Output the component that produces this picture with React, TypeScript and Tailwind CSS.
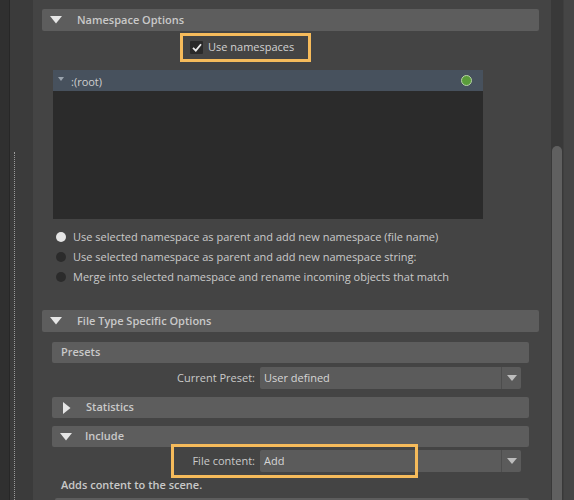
import React from "react";

const font = { fontFamily: '"Open Sans", "Noto Sans", sans-serif' };

function TriDown({ className = "" }: { className?: string }) {
  return (
    <svg width="12" height="8" viewBox="0 0 12 8" className={className}>
      <polygon points="0,0 12,0 6,7.5" fill="#e6e6e6" />
    </svg>
  );
}

function TriRight() {
  return (
    <svg width="8" height="12" viewBox="0 0 8 12">
      <polygon points="0,0 7.5,6 0,12" fill="#e6e6e6" />
    </svg>
  );
}

function SectionHeader({ title }: { title: string }) {
  return (
    <div className="flex h-[22px] items-center rounded-[2px] bg-[#5d5d5d] pl-[8px]">
      <TriDown />
      <span className="ml-[15px] text-[11px] font-semibold text-[#c9c9c9]">{title}</span>
    </div>
  );
}

function SubHeader({ title, open }: { title: string; open?: boolean | null }) {
  return (
    <div className="flex h-[21px] items-center rounded-[2px] bg-[#5d5d5d]">
      {open === true && (
        <div className="ml-[8px] mr-[13px] flex">
          <TriDown />
        </div>
      )}
      {open === false && (
        <div className="ml-[11px] mr-[15px] flex">
          <TriRight />
        </div>
      )}
      <span
        className={`text-[11px] font-semibold text-[#c9c9c9] ${open == null ? "ml-[9px]" : ""}`}
      >
        {title}
      </span>
    </div>
  );
}

function Dropdown({ value }: { value: string }) {
  return (
    <div className="flex h-[22px] w-[261px] items-center rounded-[2px] bg-[#5b5b5b]">
      <span className="flex-1 pl-[4px] text-[11px] text-[#d6d6d6]">{value}</span>
      <div className="flex h-full w-[20px] items-center justify-center border-l border-[#4d4d4d]">
        <svg width="10" height="6" viewBox="0 0 10 6">
          <polygon points="0,0 10,0 5,6" fill="#bdbdbd" />
        </svg>
      </div>
    </div>
  );
}

function Radio({ on, label }: { on?: boolean; label: string }) {
  return (
    <div className="flex h-[20px] items-center pl-[14px]">
      <span
        className={`h-[10px] w-[10px] rounded-full ${on ? "bg-[#e4e4e4]" : "bg-[#2b2b2b]"}`}
      />
      <span className="ml-[7px] text-[11px] text-[#cacaca]">{label}</span>
    </div>
  );
}

export default function App() {
  return (
    <div className="flex h-[500px] w-[574px] overflow-hidden bg-[#444444]" style={font}>
      {/* outer left strip */}
      <div className="w-[9px] bg-[#303030]" />
      <div className="w-px bg-[#272727]" />
      {/* gutter with dotted guide */}
      <div className="flex w-[23px] bg-[#3b3b3b] pt-[152px]">
        <div className="ml-[4px] h-full border-l border-dotted border-[#9a9a9a]" />
      </div>

      {/* options pane */}
      <div className="flex-1 pl-[9px] pr-[12px] pt-[9px]">
        <SectionHeader title="Namespace Options" />

        <div className="ml-[138px] mt-[2px] flex h-[29px] w-[131px] items-center border-[3px] border-[#f6bb5b] pl-[7px]">
          <span className="flex h-[13px] w-[13px] items-center justify-center rounded-[1px] bg-[#2a2a2a]">
            <svg width="10" height="9" viewBox="0 0 10 9">
              <path d="M1 4.8 L3.8 7.6 L9 1.2" stroke="#ececec" strokeWidth="1.8" fill="none" />
            </svg>
          </span>
          <span className="ml-[5px] text-[11px] text-[#d2d2d2]">Use namespaces</span>
        </div>

        <div className="ml-[11px] mt-[8px] h-[149px] w-[430px] bg-[#2b2b2b]">
          <div className="flex h-[21px] items-center bg-[#47515d] pl-[5px] pr-[11px]">
            <svg width="6" height="4" viewBox="0 0 6 4" className="mt-[-3px]">
              <polygon points="0,0 6,0 3,4" fill="#9aa3ad" />
            </svg>
            <span className="ml-[7px] mt-[3px] flex-1 text-[11px] text-[#cfcfcf]">:(root)</span>
            <span className="h-[11px] w-[11px] rounded-full border border-[#b8d3a8] bg-[#5a9c3a]" />
          </div>
        </div>

        <div className="mt-[8px]">
          <Radio on label="Use selected namespace as parent and add new namespace (file name)" />
          <Radio label="Use selected namespace as parent and add new namespace string:" />
          <Radio label="Merge into selected namespace and rename incoming objects that match" />
        </div>

        <div className="mt-[23px]">
          <SectionHeader title="File Type Specific Options" />
        </div>

        <div className="px-[10px]">
          <div className="mt-[10px]">
            <SubHeader title="Presets" />
          </div>
          <div className="mt-[4px] flex items-center">
            <span className="w-[204px] pr-[1px] text-right text-[11px] text-[#cacaca]">
              Current Preset:
            </span>
            <div className="ml-[4px]">
              <Dropdown value="User defined" />
            </div>
          </div>

          <div className="mt-[8px]">
            <SubHeader title="Statistics" open={false} />
          </div>
          <div className="mt-[8px]">
            <SubHeader title="Include" open />
          </div>

          <div className="relative mt-[3px] flex items-center">
            <span className="w-[204px] pr-[1px] text-right text-[11px] text-[#cacaca]">
              File content:
            </span>
            <div className="ml-[4px]">
              <Dropdown value="Add" />
            </div>
            <div className="pointer-events-none absolute left-[119px] top-[-6px] h-[34px] w-[247px] border-[3px] border-[#f6bb5b]" />
          </div>

          <div className="mt-[6px] flex h-[14px] items-center pl-[9px] text-[11px] font-semibold text-[#c9c9c9]">
            Adds content to the scene.
          </div>
          <div className="ml-[3px] mt-[6px] h-[21px] rounded-[2px] bg-[#5d5d5d]" />
        </div>
      </div>

      {/* scrollbar */}
      <div className="flex w-[12px] flex-col bg-[#393939] px-[1px] pt-[146px]">
        <div className="flex-1 rounded-t-[5px] bg-[#606060]" />
      </div>
      <div className="w-[11px] border-l border-[#3f3f3f] bg-[#454545]" />
    </div>
  );
}
